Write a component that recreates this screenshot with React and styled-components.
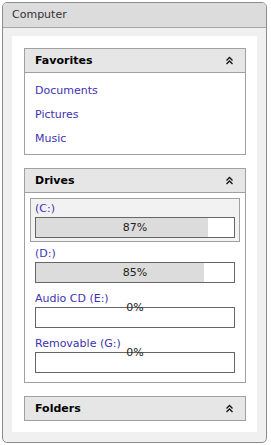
import React from 'react';
import styled, { createGlobalStyle } from 'styled-components';

const GlobalStyle = createGlobalStyle`
    body {
        margin: 0;
        background: #ffffff;
        font-family: "DejaVu Sans", "Liberation Sans", sans-serif;
    }
`;

const Panel = styled.div`
    margin: 2px;
    width: 265px;
    box-sizing: border-box;
    border: 1px solid #8c8c8c;
    border-radius: 5px;
    background: #f0f0f0;
    overflow: hidden;
`;

const PanelHeader = styled.div`
    height: 24px;
    line-height: 24px;
    padding-left: 9px;
    background: #dcdcdc;
    border-bottom: 1px solid #a8a8a8;
    color: #333;
    font-size: 11px;
`;

const PanelBody = styled.div`
    padding: 8px 9px 10px 9px;
`;

const Content = styled.div`
    background: #ffffff;
    padding: 12px 11px 11px 12px;
    display: flex;
    flex-direction: column;
    gap: 13px;
`;

const Section = styled.div`
    border: 1px solid #a0a0a0;
    background: #ffffff;
`;

const SectionHeader = styled.div`
    height: 23px;
    display: flex;
    align-items: center;
    justify-content: space-between;
    padding: 0 11px 0 10px;
    background: #e6e6e6;
    border-bottom: ${(p) => (p.open ? '1px solid #a0a0a0' : 'none')};
    color: #000;
    font-size: 11px;
    font-weight: bold;
`;

const LinkList = styled.div`
    padding: 6px 0 3px;
`;

const NavLink = styled.a`
    display: block;
    line-height: 24px;
    padding-left: 10px;
    color: #3d33b0;
    font-size: 11px;
    text-decoration: none;
`;

const DriveList = styled.div`
    padding: 5px;
    display: flex;
    flex-direction: column;
    gap: 1px;
`;

const DriveItem = styled.div`
    padding: 0 4px 3px;
    border: 1px solid ${(p) => (p.active ? '#a0a0a0' : 'transparent')};
    background: ${(p) => (p.active ? '#f2f2f2' : 'transparent')};
`;

const DriveLabel = styled.div`
    height: 18px;
    padding-top: 1px;
    box-sizing: border-box;
    line-height: 17px;
    color: #3d33b0;
    font-size: 11px;
`;

const Bar = styled.div`
    position: relative;
    height: 21px;
    box-sizing: border-box;
    border: 1px solid #666;
    background: #ffffff;
`;

const Fill = styled.div`
    height: 100%;
    background: #dcdcdc;
`;

const Percent = styled.span`
    position: absolute;
    left: 0;
    right: 0;
    top: ${(p) => (p.empty ? '-10px' : '0')};
    line-height: 19px;
    text-align: center;
    color: #222;
    font-size: 11px;
`;

function Chevrons() {
    return (
        <svg width="9" height="9" viewBox="0 0 9 9" fill="none" stroke="#111" strokeWidth="1.3">
            <polyline points="1.5,4.5 4.5,1.5 7.5,4.5" />
            <polyline points="1.5,8 4.5,5 7.5,8" />
        </svg>
    );
}

const favorites = ['Documents', 'Pictures', 'Music'];

const drives = [
    { label: '(C:)', used: 87, active: true },
    { label: '(D:)', used: 85 },
    { label: 'Audio CD (E:)', used: 0 },
    { label: 'Removable (G:)', used: 0 },
];

export default function App() {
    return (
        <>
            <GlobalStyle />
            <Panel>
                <PanelHeader>Computer</PanelHeader>
                <PanelBody>
                    <Content>
                        <Section>
                            <SectionHeader open>
                                Favorites
                                <Chevrons />
                            </SectionHeader>
                            <LinkList>
                                {favorites.map((f) => (
                                    <NavLink key={f} href="#">{f}</NavLink>
                                ))}
                            </LinkList>
                        </Section>

                        <Section>
                            <SectionHeader open>
                                Drives
                                <Chevrons />
                            </SectionHeader>
                            <DriveList>
                                {drives.map((d) => (
                                    <DriveItem key={d.label} active={d.active}>
                                        <DriveLabel>{d.label}</DriveLabel>
                                        <Bar>
                                            <Fill style={{ width: `${d.used}%` }} />
                                            <Percent empty={d.used === 0}>{d.used}%</Percent>
                                        </Bar>
                                    </DriveItem>
                                ))}
                            </DriveList>
                        </Section>

                        <Section>
                            <SectionHeader>
                                Folders
                                <Chevrons />
                            </SectionHeader>
                        </Section>
                    </Content>
                </PanelBody>
            </Panel>
        </>
    );
}
